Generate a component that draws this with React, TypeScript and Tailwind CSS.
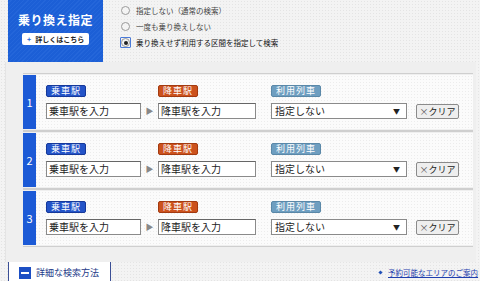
import React from "react";

const dots =
  "bg-[#f3f3f3] bg-[radial-gradient(#e4e4e4_0.6px,transparent_0.8px)] bg-[length:3px_3px]";
const rowDots =
  "bg-[#fbfbfb] bg-[radial-gradient(#ececec_0.6px,transparent_0.8px)] bg-[length:3px_3px]";

const radioOptions = [
  { id: "r1", label: "指定しない（通常の検索）", checked: false },
  { id: "r2", label: "一度も乗り換えしない", checked: false },
  { id: "r3", label: "乗り換えせず利用する区間を指定して検索", checked: true },
];

const rows = [1, 2, 3];

const Badge = ({ text, color }: { text: string; color: string }) => (
  <span
    className={`inline-flex h-[12px] items-center px-[4px] text-[9px] leading-none tracking-[1px] text-white rounded-[2px] ${color}`}
  >
    {text}
  </span>
);

const TransferRow = ({ num }: { num: number }) => (
  <div className="border-t border-b border-[#cfcfcf] py-[1px]">
    <div className={`flex h-[54px] ${rowDots}`}>
      {/* number strip */}
      <div className="w-[13px] bg-[#1c5ad6] flex items-center justify-center text-white text-[11px] pt-[1px]">
        {num}
      </div>
      <div className="flex items-end pl-[10px] pb-[10px]">
        <div className="flex flex-col gap-[4px] w-[95px]">
          <div>
            <Badge text="乗車駅" color="bg-[#2454c8] border border-[#16399a]" />
          </div>
          <div className="h-[16px] border border-[#8a8a8a] border-t-[#666] bg-white text-[10px] leading-[14px] pl-[2px] text-[#222]">
            乗車駅を入力
          </div>
        </div>
        <div className="w-[17px] h-[16px] flex items-center justify-center text-[8px] text-[#888]">
          ▶
        </div>
        <div className="flex flex-col gap-[4px] w-[98px]">
          <div>
            <Badge text="降車駅" color="bg-[#cc521d] border border-[#a33a10]" />
          </div>
          <div className="h-[16px] border border-[#8a8a8a] border-t-[#666] bg-white text-[10px] leading-[14px] pl-[2px] text-[#222]">
            降車駅を入力
          </div>
        </div>
        <div className="flex flex-col gap-[4px] w-[136px] ml-[15px]">
          <div>
            <Badge text="利用列車" color="bg-[#6e9ec0] border border-[#5a88a8]" />
          </div>
          <div className="h-[16px] border border-[#8a8a8a] bg-white text-[10px] leading-[14px] pl-[3px] pr-[6px] text-[#222] flex justify-between">
            <span>指定しない</span>
            <span className="text-[7px] leading-[14px]">▼</span>
          </div>
        </div>
        <div className="ml-[9px] w-[43px] h-[15px] border border-[#8a8a8a] bg-[#eeeeee] rounded-[2px] text-[9px] leading-[13px] text-center text-[#222]">
          <span className="text-[#555]">×</span>クリア
        </div>
      </div>
    </div>
  </div>
);

export default function App() {
  return (
    <div
      className={`w-[480px] h-[281px] overflow-hidden ${dots} font-['Noto_Sans_CJK_JP','Noto_Sans',sans-serif]`}
    >
      {/* top: mode selection */}
      <div className="flex h-[62px] pl-[8px]">
        <div className="w-[95px] h-[62px] bg-[#1c5fd6] bg-[repeating-linear-gradient(135deg,#1c5fd6_0px,#1c5fd6_2px,#2466da_2px,#2466da_3px)] flex flex-col items-center pt-[12px]">
          <div className="text-white text-[12px] font-bold leading-[16px] tracking-[0.5px]">
            乗り換え指定
          </div>
          <div className="mt-[5px] w-[67px] h-[12px] bg-white rounded-[2px] flex items-center pl-[5px] gap-[4px] text-[7px] font-bold text-[#222] leading-none">
            <span className="text-[#1c5fd6] text-[7px]">+</span>
            詳しくはこちら
          </div>
        </div>
        <div className="flex flex-col ml-[17px] pt-[5px] gap-[5px]">
          {radioOptions.map((o) => (
            <div key={o.id} className="flex items-center h-[11px] gap-[5px] text-[7.5px] text-[#444] leading-none">
              <div
                className={`w-[11px] h-[11px] flex items-center justify-center ${
                  o.checked ? "border border-[#4a7ad8] rounded-[1px]" : ""
                }`}
              >
                <div className="w-[9px] h-[9px] rounded-full border border-[#9a9a9a] bg-[#f4f4f4] flex items-center justify-center">
                  {o.checked && <div className="w-[4px] h-[4px] rounded-full bg-[#222]" />}
                </div>
              </div>
              <span className={o.checked ? "text-[#111]" : ""}>{o.label}</span>
            </div>
          ))}
        </div>
      </div>

      {/* section panel */}
      <div className="ml-[5px] w-[471px] h-[200px] bg-[#efefef] pt-[11px] pl-[17px] pr-[3px] border-l border-[#e4e4e4]">
        {rows.map((n) => (
          <TransferRow key={n} num={n} />
        ))}
      </div>

      {/* bottom */}
      <div className="flex items-start h-[19px]">
        <div className="ml-[8px] w-[103px] h-[19px] bg-white border-l border-r border-[#3b4f95] flex items-center pl-[10px] gap-[5px] pt-[2px]">
          <div className="w-[12px] h-[12px] bg-[#1c4fc4] flex items-center justify-center">
            <div className="w-[8px] h-[2px] bg-white" />
          </div>
          <span className="text-[9px] text-[#1d3a88] leading-none">詳細な検索方法</span>
        </div>
        <div className="ml-auto flex items-center gap-[6px] pt-[7px] pr-[2px]">
          <span className="w-[3px] h-[3px] bg-[#2050b8] rotate-45" />
          <span className="text-[7.5px] text-[#1f3fae] underline leading-none whitespace-nowrap">
            予約可能なエリアのご案内
          </span>
        </div>
      </div>
    </div>
  );
}
